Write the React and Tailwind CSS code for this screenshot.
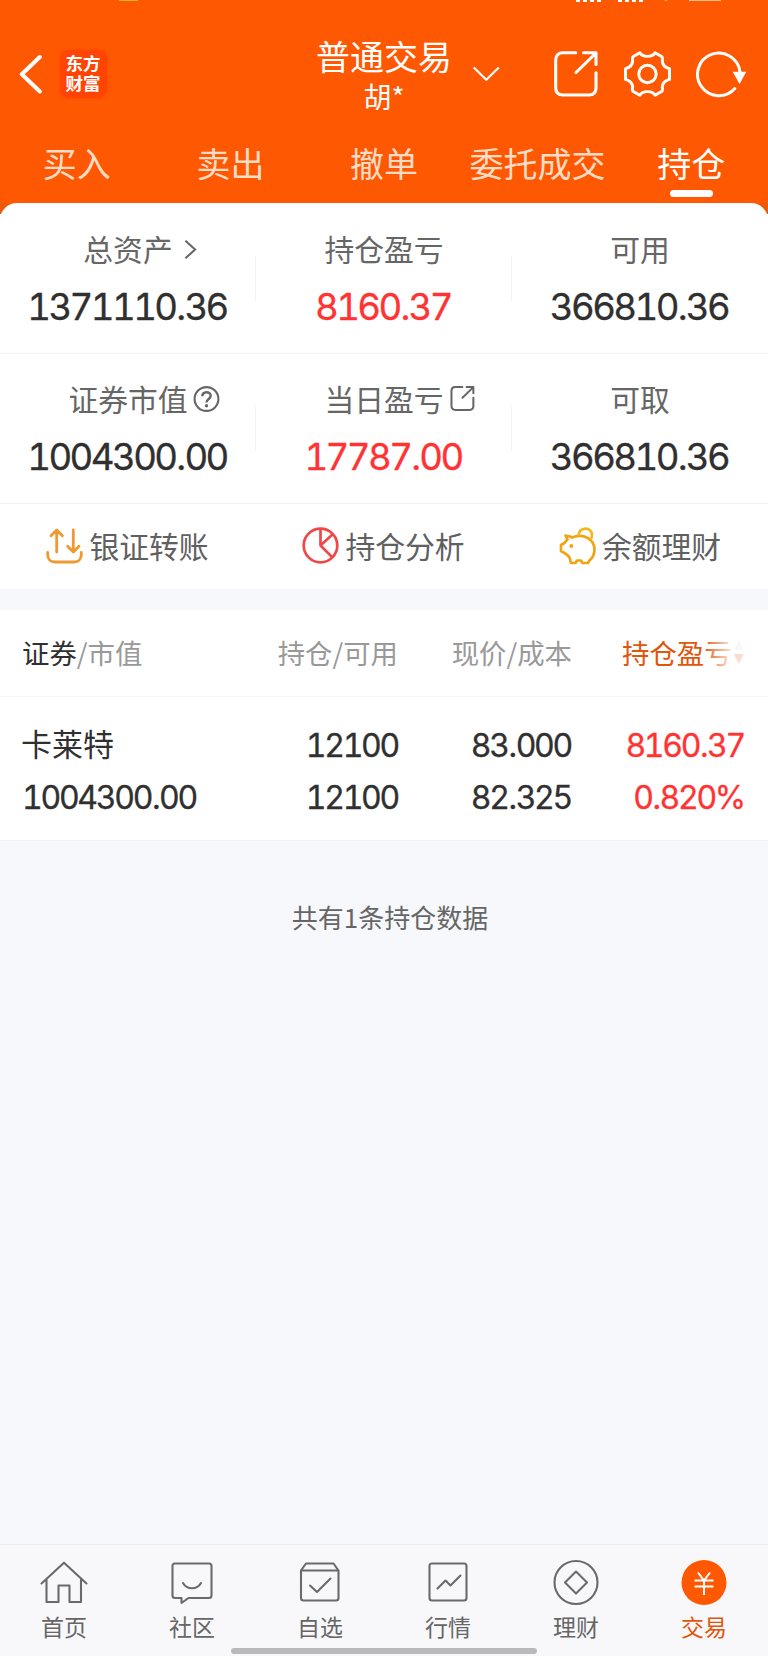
import React from "react";

const CJK = "font-['Noto_Sans_CJK_SC',sans-serif]";
const NUM = "font-['Inter','Noto_Sans_CJK_SC',sans-serif] font-normal tabular-nums [-webkit-text-stroke:0.3px_currentColor]";

function Amount({ children }) {
  const [whole, fraction] = children.split(".");
  return (
    <>
      {whole}
      <span className="mx-[0.800px]">.</span>
      {fraction}
    </>
  );
}

function ShareIcon({ className, strokeWidth }) {
  return (
    <svg className={className} viewBox="0 0 44 46" fill="none" stroke="currentColor" strokeWidth={strokeWidth} strokeLinecap="round" strokeLinejoin="round">
      <path d="M21.700 1.700H9C4.500 1.700 1.700 4.500 1.700 9v28c0 4.500 2.800 7 7.300 7h26c4.500 0 7-2.500 7-7V21.800M29.500 1.700H42V13.500M41 3L22 21.500" />
    </svg>
  );
}

function Header() {
  return (
    <header className="flex h-[203px] flex-col bg-[#ff5802] text-white">
      <div className="relative h-[36px] shrink-0">
        <svg className="absolute left-0 top-0 h-[3px] w-full" viewBox="0 0 768 3">
          <path d="M119 0h19v1h-19z" fill="#e3b32c" />
          <path d="M576 0h4v2h-4zM583 0h4v2h-4zM590 0h4v2h-4zM597 0h4v2h-4zM618 0h4v2h-4zM625 0h4v2h-4zM632 0h4v2h-4zM639 0h4v2h-4z" fill="#fff" />
          <path d="M664 0h4l-2 1zM689 0h32v1h-32z" fill="#f0c08a" />
        </svg>
      </div>
      <div className="grid h-[80px] shrink-0 grid-cols-[256px_256px_256px]">
        <div className="flex items-start pl-[19px] pt-[14px]">
          <svg className="mt-[4px] h-[40px] w-[24px]" viewBox="0 0 24 40" fill="none" stroke="#fff" strokeWidth="4" strokeLinecap="round" strokeLinejoin="round">
            <path d="M20.800 3L2.800 20.300L20.800 37.500" />
          </svg>
          <div className="ml-[17px] flex h-[48px] w-[47px] flex-col items-center justify-center rounded-[9px] bg-[#ff4403] pb-[2px] pr-px text-[17.500px] font-bold leading-[20.500px] shadow-[0_0_3px_#ff4403]">
            <span>东方</span>
            <span>财富</span>
          </div>
        </div>
        <div className="relative flex flex-col items-center">
          <div className="text-[34px] leading-[40px]">普通交易</div>
          <div className="text-[28px] leading-[40px]">胡*</div>
          <svg className="absolute left-[216px] top-[29px] h-[18px] w-[28px]" viewBox="0 0 28 18" fill="none" stroke="#fff" strokeWidth="2.200">
            <path d="M1.800 2.500L14.300 14.800L26.800 2.500" />
          </svg>
        </div>
        <div className="flex items-start pl-[42px] pt-[14px]">
          <ShareIcon className="mt-[1px] h-[46px] w-[44px]" strokeWidth="3.100" />
          <svg className="ml-[26px] mt-px h-[46px] w-[47px]" viewBox="0 0 47.500 46" fill="none" stroke="#fff" strokeWidth="3" strokeLinejoin="round">
            <path d="M16 1.600Q18 5.200 23.700 5.200Q29.400 5.200 31.400 1.600L37.500 5Q39.300 5.800 38.800 8.500C38.300 13 40.500 16 46 17.500V28.500C40.500 30 38.300 33 38.800 37.500Q39.300 40.200 37.500 41L31.400 44.400Q29.400 40.800 23.700 40.800Q18 40.800 16 44.400L9.900 41Q8.100 40.200 8.600 37.500C9.100 33 6.900 30 1.500 28.500V17.500C6.900 16 9.100 13 8.600 8.500Q8.100 5.800 9.900 5Z" />
            <circle cx="23.700" cy="23" r="8.800" />
          </svg>
          <svg className="ml-[25px] h-[48px] w-[54px]" viewBox="0 0 54 48" fill="none" stroke="#fff" strokeWidth="3">
            <path d="M44 22A21.300 21.300 0 1 0 38.800 38.500" strokeLinecap="round" />
            <path d="M36.700 21.800h13.600l-6.800 12.200z" fill="#fff" stroke="none" />
          </svg>
        </div>
      </div>
      <nav className="grid h-[87px] grid-cols-5 pt-[24px] text-center text-[34px] leading-[46px] text-[#ffdcc5]">
        <span>买入</span>
        <span>卖出</span>
        <span>撤单</span>
        <span>委托成交</span>
        <span className="flex flex-col items-center text-white">
          持仓
          <i className="mt-[4px] block h-[7px] w-[43px] shrink-0 rounded-full bg-white" />
        </span>
      </nav>
    </header>
  );
}

function Stat({ label, value, red, icon, divider }) {
  return (
    <div className="flex h-full items-start">
      <div className="flex flex-1 flex-col items-center">
        <div className="relative text-[29.800px] leading-[44px] text-[#666]">
          {label}
          {icon}
        </div>
        <div className={`${NUM} mt-[15px] pr-[2px] text-[36.700px] leading-[44px] tracking-[-2.600px] ${red ? "text-[#ff3333]" : "text-[#303030]"}`}>
          <Amount>{value}</Amount>
        </div>
      </div>
      {divider && <div className="-ml-px mt-[30px] h-[45px] w-px bg-[#f3f3f5]" />}
    </div>
  );
}

function Summary() {
  return (
    <section className="h-[386px] bg-[linear-gradient(#e85a0c_0,#e85a0c_11px,#fff_11px)]">
      <div className="h-full rounded-t-[17px] bg-white">
        <div className="grid h-[151px] grid-cols-3 border-b border-[#f1f1f3] pt-[23px]">
          <Stat
            label="总资产"
            value="1371110.36"
            divider
            icon={
              <svg className="absolute left-[101px] top-[13px] h-[21px] w-[13px]" viewBox="0 0 14 22" fill="none" stroke="currentColor" strokeWidth="2.200">
                <path d="M1.500 1.500L12 11L1.500 20.500" />
              </svg>
            }
          />
          <Stat label="持仓盈亏" value="8160.37" red divider />
          <Stat label="可用" value="366810.36" />
        </div>
        <div className="grid h-[150px] grid-cols-3 border-b border-[#f1f1f3] pt-[22px]">
          <Stat
            label="证券市值"
            value="1004300.00"
            divider
            icon={
              <svg className="absolute left-[125px] top-[10px] h-[26px] w-[27px]" viewBox="0 0 27 26" fill="none" stroke="currentColor" strokeWidth="2.100">
                <circle cx="13.500" cy="13" r="11.900" />
                <path d="M9.300 10.300c0-5.300 8.400-5.300 8.400-.5 0 3.200-4.200 3.200-4.200 6.700" strokeWidth="2.400" />
                <circle cx="13.500" cy="19.700" r="1.700" fill="currentColor" stroke="none" />
              </svg>
            }
          />
          <Stat label="当日盈亏" value="17787.00" red divider icon={<ShareIcon className="absolute left-[126px] top-[10px] h-[25px] w-[25px]" strokeWidth="3.700" />} />
          <Stat label="可取" value="366810.36" />
        </div>
        <div className="grid h-[84px] grid-cols-3 text-[29.800px] leading-[44px] text-[#606060]">
          <div className="flex items-center justify-center gap-[6px] pr-px">
            <svg className="-mt-px h-[36px] w-[37px]" viewBox="0 0 37 36" fill="none" stroke="#ee9a30" strokeWidth="2.800" strokeLinecap="round" strokeLinejoin="round">
              <path d="M1.700 24.500v2.200c0 4.500 2.800 7.300 7.300 7.300h19c4.500 0 7.300-2.800 7.300-7.300v-2.200M10.700 24V2.500M5 7.800L10.700 2l5.700 5.800M27.300 2v22M21.600 18.200l5.700 5.800 5.700-5.800" />
            </svg>
            <span className="-mt-[3px]">银证转账</span>
          </div>
          <div className="flex items-center justify-center gap-[6px] pr-px">
            <svg className="-mt-[2px] h-[37px] w-[37px]" viewBox="0 0 37 37" fill="none" stroke="#f04848" strokeWidth="2.700" strokeLinejoin="round">
              <circle cx="18.500" cy="18.500" r="16.800" />
              <path d="M18.500 2v16.500L30.500 30.500M18.500 18.500L31 7" />
            </svg>
            <span className="-mt-[3px]">持仓分析</span>
          </div>
          <div className="flex items-center justify-center gap-[5px]">
            <svg className="-mt-px h-[38px] w-[38px]" viewBox="0 0 38 38" fill="none" stroke="#f2a313" strokeWidth="2.700" strokeLinejoin="round">
              <path d="M6.500 8.500L11 9.500Q13.500 11 15 9.700C25 7 35.500 12 35.500 22.500C35.500 27 33.500 31 30.500 33.500L29 36H23.500L22 33.500H18L16.500 36H12L10.500 30.500Q8.500 27.500 5.500 26L2 24V18L5.500 16Q6.500 14.500 8.500 12.500Z" />
              <path d="M19.500 9C19 -.5 33.500 -1 33 8.500Q32.800 11 31.500 12.500" stroke="#f2b71c" />
              <circle cx="12.300" cy="19" r="1.900" fill="#f2a313" stroke="none" />
            </svg>
            <span className="-mt-[3px]">余额理财</span>
          </div>
        </div>
      </div>
    </section>
  );
}

function Positions() {
  const cols = "grid grid-cols-[200px_176px_174px_172px] pl-[22px]";
  return (
    <section className="mt-[21px] h-[231px] border-b border-[#f1f1f3] bg-white">
      <div className={`${cols} h-[87px] items-center border-b border-[#f5f5f6] pb-[2px] text-[27.400px] leading-[40px] text-[#999]`}>
        <span>
          <span className="text-[#303030]">证券</span>/市值
        </span>
        <span className="text-right">持仓/可用</span>
        <span className="text-right">现价/成本</span>
        <span className="relative flex items-center overflow-hidden pl-[50px] text-[#e0560c]">
          <span className="shrink-0">持仓盈亏</span>
          <svg className="ml-px h-[24px] w-[12px] shrink-0" viewBox="0 0 12 24">
            <path d="M6 0l5 10H1z" fill="#ddd" />
            <path d="M6 24L1 14h10z" fill="#e0560c" />
          </svg>
          <i className="absolute inset-y-0 right-0 w-[42px] bg-[linear-gradient(90deg,#ffffff00,#ffffffb8_60%,#ffffffd8)]" />
        </span>
      </div>
      <div className={`${cols} ${NUM} pt-[23px] text-[32px] leading-[51.500px] tracking-[-2.300px] text-[#303030]`}>
        <span className={`${CJK} -ml-px -mt-[3px] text-[31px] tracking-normal [-webkit-text-stroke:0]`}>卡莱特</span>
        <span className="text-right">12100</span>
        <span className="pr-px text-right">
          <Amount>83.000</Amount>
        </span>
        <span className="text-right text-[#ff3333]">
          <Amount>8160.37</Amount>
        </span>
        <span>
          <Amount>1004300.00</Amount>
        </span>
        <span className="text-right">12100</span>
        <span className="pr-px text-right">
          <Amount>82.325</Amount>
        </span>
        <span className="text-right text-[#ff3333]">
          <Amount>0.820%</Amount>
        </span>
      </div>
    </section>
  );
}

const ICONS = {
  home: (
    <path d="M2 22.500L24.500 1.700L47 22.500M7 18.500V41H19V24.500H30V41H41.500V18.500" />
  ),
  community: (
    <path d="M6.500 2.500h35q2.500 0 2.500 2.500v29.500q0 2.500-2.500 2.500H21l-7 5V37H7.500Q5 37 5 34.500V5q0-2.500 2.500-2.500M15.500 22c4 7 14 7 18 0" />
  ),
  watch: (
    <path d="M5.500 9.500L10.500 2.500H38L43 9.500V37q0 2.500-2.500 2.500H8Q5.500 39.500 5.500 37ZM5.500 9.500H43M14.500 24.500l7 6.500L35 17.500" />
  ),
  market: (
    <path d="M8.500 2.500h32q2.500 0 2.500 2.500v32q0 2.500-2.500 2.500h-32Q6 39.500 6 37V5q0-2.500 2.500-2.500M14 27.500l8-8 5 5L37 14.500" />
  ),
  wealth: (
    <>
      <circle cx="24.500" cy="21.500" r="21.500" />
      <path d="M24.500 10.500L35.500 21.500L24.500 32.500L13.500 21.500Z" />
    </>
  ),
};

function BottomNav() {
  const items = [
    ["home", "首页"],
    ["community", "社区"],
    ["watch", "自选"],
    ["market", "行情"],
    ["wealth", "理财"],
  ];
  return (
    <footer className="relative h-[112px] border-t border-[#ebedf0] bg-[#f8f8fb]">
      <div className="grid grid-cols-6 pt-[15px] text-[23px] leading-[34px] text-[#666]">
        {items.map(([icon, label]) => (
          <div key={icon} className="flex flex-col items-center">
            <svg className="h-[49px] w-[49px] overflow-visible" viewBox="0.500 -1 49 49" fill="none" stroke="#6a6a6a" strokeWidth="2.100" strokeLinejoin="round" strokeLinecap="round">
              {ICONS[icon]}
            </svg>
            <span>{label}</span>
          </div>
        ))}
        <div className="flex flex-col items-center text-[#e0560c]">
          <svg className="h-[49px] w-[49px] overflow-visible" viewBox="0.500 -1 49 49" fill="none" stroke="#fff" strokeWidth="2">
            <circle cx="24.500" cy="21.500" r="22.500" fill="#ff5802" stroke="none" />
            <path d="M18.500 11.500l6 8 6-8M24.500 19.500V34M15 19.500h19M15 25.500h19" />
          </svg>
          <span>交易</span>
        </div>
      </div>
      <i className="absolute left-[231px] top-[103px] block h-[6px] w-[306px] rounded-full bg-[#b9b9bb]" />
    </footer>
  );
}

export default function App() {
  return (
    <div className={`${CJK} flex h-[1656px] w-[768px] flex-col overflow-hidden bg-[#f7f8fb]`}>
      <Header />
      <Summary />
      <Positions />
      <p className="flex-1 pl-[12px] pt-[56px] text-center text-[26px] leading-[40px] text-[#666]">共有1条持仓数据</p>
      <BottomNav />
    </div>
  );
}
